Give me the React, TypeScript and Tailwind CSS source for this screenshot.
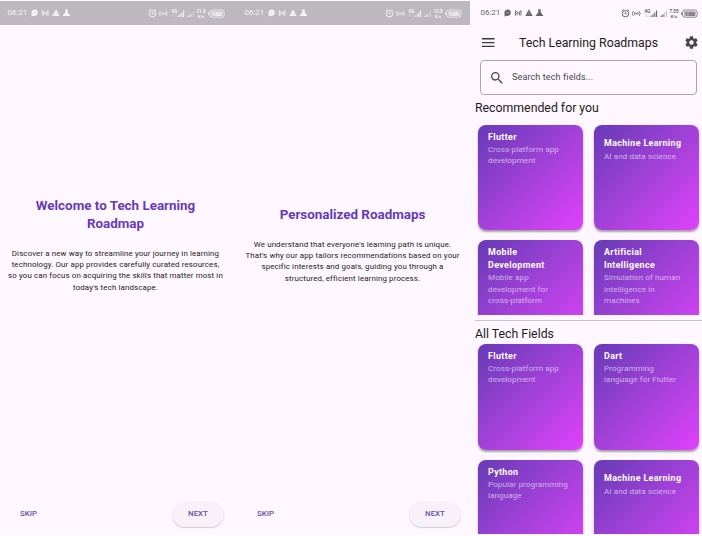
import React from "react";

type Tone = { fg: string; cut: string };

function StatusBar({ rate, tone, className }: { rate: string; tone: Tone; className: string }) {
  return (
    <div className={`flex h-[24px] shrink-0 items-center ${className}`} style={{ color: tone.fg }}>
      <span className="w-[23.500px] text-[8px] leading-[10px] tracking-[-0.05px]">06:21</span>
      <svg width="40" height="10" viewBox="0 0 40 10" fill="currentColor">
        <path d="M3.6 1.4a3.300 3.300 0 1 1-1.200 6.400L.4 8.400.7 6A3.300 3.300 0 0 1 3.600 1.400Z" />
        <path d="M2.400 4.800h2.400" stroke={tone.cut} strokeWidth=".6" />
        <path d="M11.400 7.600V2.600l2.800 2.500L17 2.600v5M13 7.400V4.500M15.500 7.400V4.500" fill="none" stroke="currentColor" strokeWidth=".9" />
        <path d="m25 1.300 3.600 6.700h-7.200Z" />
        <path d="M25 4v1.600M25 6.200v.8" stroke={tone.cut} strokeWidth=".4" />
        <path d="M34.300 1.300h2.400v3l2.800 3.700h-8l2.800-3.700Z" />
      </svg>
      <svg className="ml-auto" width="77" height="11" viewBox="0 0 77 11" fill="none" stroke="currentColor">
        <circle cx="4.5" cy="5.7" r="3.2" strokeWidth="1" />
        <path d="M4.300 4v2h1.600M.8 3 2.600 1.400M6.400 1.400 8.200 3" strokeWidth=".9" />
        <path d="M12.200 3.200q-1.400 2.200 0 4.600M14 4q-.8 1.500 0 3M16.600 4q.8 1.500 0 3M18.400 3.200q1.400 2.200 0 4.600" strokeWidth=".9" />
        <circle cx="15.300" cy="5.500" r=".7" fill="currentColor" stroke="none" />
        <path d="M30.200 9V7.500M32 9V6.200M33.800 9V4.400M35.600 9V2.600M40.200 9V7.500M42 9V6.200" strokeWidth="1.1" />
        <path d="M43.800 9V4.400M45.600 9V2.600" strokeWidth="1" opacity=".4" />
        <rect x="61.600" y="2" width="14.600" height="7.200" rx="2.600" strokeWidth=".8" />
        <rect x="63" y="3.200" width="11.800" height="4.800" rx="1.200" fill="currentColor" fillOpacity=".45" stroke="none" />
        <path d="M60.600 4.500v2.400" strokeWidth=".9" />
        <g fill="currentColor" stroke="none" fontFamily="Roboto, sans-serif" fontWeight="700" textAnchor="middle">
          <text x="26.200" y="5" fontSize="4.800">4G</text>
          <text x="25.800" y="9.400" fontSize="4.600">↑↓</text>
          <text x="53" y="5.100" fontSize="4.500">{rate}</text>
          <text x="53" y="9.500" fontSize="4.200">K/s</text>
          <text x="68.900" y="7.700" fontSize="6">100</text>
        </g>
      </svg>
    </div>
  );
}

function Lines({ lines, className }: { lines: string[]; className: string }) {
  return (
    <div className={className}>
      {lines.map((l) => (
        <div key={l} className="whitespace-nowrap">{l}</div>
      ))}
    </div>
  );
}

function Onboarding({ title, body, rate, className, bar, gap, actions }: {
  title: string[]; body: string[]; rate: string; className: string; bar: string; gap: string; actions: string;
}) {
  return (
    <section className={`flex h-full flex-col ${className}`}>
      <StatusBar rate={rate} tone={{ fg: "#f7f2f8", cut: "#bdb7be" }} className={`bg-[#bdb7be] ${bar}`} />
      <div className={`flex flex-col items-center text-center ${gap}`}>
        <Lines lines={title} className="text-[13.4px] font-bold leading-[18px] text-[#673ab7]" />
        <Lines lines={body} className="mt-[15.500px] text-[7.9px] leading-[11.2px] tracking-[0.13px] text-[#1d1b20]" />
      </div>
      <div className={`mt-auto mb-[8px] flex h-[27px] items-center justify-between pr-[9px] text-[7.9px] font-medium text-[#6750a4] ${actions}`}>
        <button>SKIP</button>
        <button className="h-[26px] w-[52px] rounded-full bg-[#f7f2fa] shadow-[0_1px_1px_rgba(0,0,0,0.18)]">NEXT</button>
      </div>
    </section>
  );
}

type Field = { name: string[]; about: string[] };

function Card({ name, about }: Field) {
  const single = about.length === 1;
  return (
    <div className={`h-[105.5px] w-[105.5px] rounded-[8px] bg-linear-135 from-[#673ab7] to-[#e040fb] pl-[10.5px] shadow-[0_1.5px_2px_rgba(0,0,0,0.35)] ${single ? "pt-[12px]" : "pt-[6px]"}`}>
      <Lines lines={name} className="text-[8.9px] font-bold leading-[13.2px] tracking-[0.37px] text-white" />
      <Lines lines={about} className={`text-[8.1px] leading-[11.1px] tracking-[0.08px] text-white/60 ${single ? "pt-[1.5px]" : ""}`} />
    </div>
  );
}

function Grid({ fields, className }: { fields: Field[]; className: string }) {
  return (
    <div className={`grid shrink-0 grid-cols-[105.5px_105.5px] content-start gap-x-[10.5px] gap-y-[10px] overflow-hidden pl-[7.5px] ${className}`}>
      {fields.map((f) => <Card key={f.name[0]} {...f} />)}
    </div>
  );
}

const flutter: Field = { name: ["Flutter"], about: ["Cross-platform app", "development"] };
const ml: Field = { name: ["Machine Learning"], about: ["AI and data science"] };
const recommended: Field[] = [
  flutter,
  ml,
  { name: ["Mobile", "Development"], about: ["Mobile app", "development for", "cross-platform"] },
  { name: ["Artificial", "Intelligence"], about: ["Simulation of human", "intelligence in", "machines"] },
];
const all: Field[] = [
  flutter,
  { name: ["Dart"], about: ["Programming", "language for Flutter"] },
  { name: ["Python"], about: ["Popular programming", "language"] },
  ml,
];

function Home() {
  return (
    <section className="flex h-full w-[232px] flex-col text-[#1d1b20]">
      <StatusBar rate="7.55" tone={{ fg: "#67626a", cut: "#fef7ff" }} className="pl-[10.5px] pr-[4.500px]" />
      <header className="flex h-[35px] shrink-0 items-center pl-[12px] pr-[3.5px]">
        <svg width="13" height="10" viewBox="0 0 13 10" stroke="#3b373e" strokeWidth="1.4"><path d="M0 .8h12.500M0 4.600h12.500M0 8.400h12.500" /></svg>
        <h1 className="ml-[24px] whitespace-nowrap text-[12.3px] leading-[18px]">Tech Learning Roadmaps</h1>
        <svg className="ml-auto" width="15" height="15" viewBox="0 0 24 24" fill="#49454f"><path d="M19.43 12.98c.04-.32.07-.64.07-.98s-.03-.66-.07-.98l2.11-1.65c.19-.15.24-.42.12-.64l-2-3.46c-.12-.22-.39-.3-.61-.22l-2.49 1c-.52-.4-1.08-.73-1.69-.98l-.38-2.65A.49.49 0 0 0 14 2h-4c-.25 0-.46.18-.49.42l-.38 2.65c-.61.25-1.17.59-1.69.98l-2.49-1c-.23-.09-.49 0-.61.22l-2 3.46c-.13.22-.07.49.12.64l2.11 1.65c-.04.32-.07.65-.07.98s.03.66.07.98l-2.11 1.65c-.19.15-.24.42-.12.64l2 3.46c.12.22.39.3.61.22l2.49-1c.52.4 1.08.73 1.69.98l.38 2.65c.03.24.24.42.49.42h4c.25 0 .46-.18.49-.42l.38-2.65c.61-.25 1.17-.59 1.69-.98l2.49 1c.23.09.49 0 .61-.22l2-3.46c.12-.22.07-.49-.12-.64zM12 15.5a3.5 3.5 0 1 1 0-7 3.5 3.5 0 0 1 0 7z" /></svg>
      </header>
      <div className="ml-[9.5px] flex h-[35px] w-[217px] shrink-0 items-center rounded-[4px] border border-[#aaa5ae] pl-[8px] text-[#49454f]">
        <svg width="16" height="16" viewBox="0 0 24 24" fill="currentColor"><path d="M15.5 14h-.79l-.28-.27A6.47 6.47 0 0 0 16 9.500 6.500 6.500 0 1 0 9.500 16c1.610 0 3.090-.59 4.230-1.570l.27.28v.79l5 4.990L20.490 19zm-6 0a4.500 4.500 0 1 1 0-9 4.500 4.500 0 0 1 0 9z" /></svg>
        <span className="ml-[7.5px] pt-px text-[9px] tracking-[0.13px]">Search tech fields...</span>
      </div>
      <h2 className="mt-[3px] ml-[5px] h-[20px] shrink-0 whitespace-nowrap text-[12.3px] leading-[20px]">Recommended for you</h2>
      <Grid fields={recommended} className="h-[197px] pt-[6.500px]" />
      <div className="mt-[5px] ml-[5px] h-px shrink-0 bg-[#cac4d0]" />
      <h2 className="mt-[3px] ml-[5px] h-[19px] shrink-0 whitespace-nowrap text-[12.3px] leading-[20px]">All Tech Fields</h2>
      <Grid fields={all} className="h-[191px] pt-px" />
    </section>
  );
}

export default function App() {
  return (
    <main className="flex h-[536px] w-[702px] overflow-hidden border-y border-white bg-[#fef7ff] font-[Roboto,sans-serif]">
      <Onboarding
        title={["Welcome to Tech Learning", "Roadmap"]}
        body={["Discover a new way to streamline your journey in learning", "technology. Our app provides carefully curated resources,", "so you can focus on acquiring the skills that matter most in", "today's tech landscape."]}
        rate="21.8" className="w-[233px]" bar="pl-[7.5px] pr-[8px]" gap="mt-[171.500px] pr-[2px]" actions="pl-[20px]"
      />
      <Onboarding
        title={["Personalized Roadmaps"]}
        body={["We understand that everyone's learning path is unique.", "That's why our app tailors recommendations based on your", "specific interests and goals, guiding you through a", "structured, efficient learning process."]}
        rate="15.8" className="w-[237px]" bar="pl-[11.5px] pr-[8px]" gap="mt-[180.500px] pl-[2px]" actions="pl-[24px]"
      />
      <Home />
    </main>
  );
}
